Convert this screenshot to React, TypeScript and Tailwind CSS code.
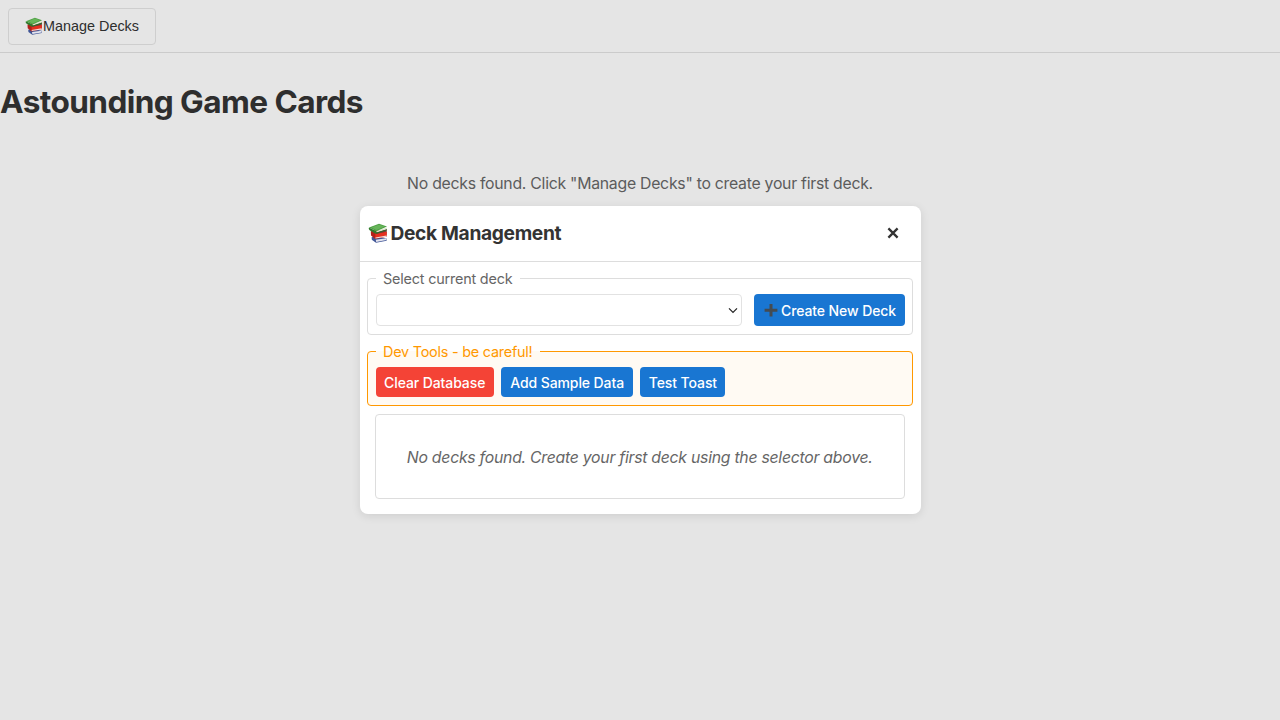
function Books({ className }: { className: string }) {
  return (
    <svg viewBox="0 0 20 20" className={className} aria-hidden="true">
      <path d="M3.6 14.2 8 13l10.6 2.4v2.4L8 19.8 3.8 16.8z" fill="#3f5596" />
      <path d="M7.8 16.8 18.4 15.2v1.9L8.2 18.9z" fill="#e4e4ee" />
      <path d="M2.8 8.2 8 7l10.8 1.5-.2 5.2L7.2 16 3 12.6z" fill="#b3201a" />
      <path d="M7.3 10.6 18.8 8.8l-.3 4.2L7.4 14.8z" fill="#e6301f" />
      <path d="M7.4 14.4 18.5 12.6v1.2L7.4 15.6z" fill="#f3dedb" />
      <path d="M7.6 9.2 18.8 6v2.6L8.4 10.9z" fill="#6a4138" />
      <path d="M8.2 8 18.8 4.6v1.6L8.6 9.6z" fill="#dfe6cf" />
      <path d="M1 4.6C.5 5.8.8 6.6 1.6 7.2l6.1 3.6.9-.7L8 8z" fill="#2f7a2c" />
      <path d="M1 4.6 11 .8l8 2.7L8.4 8.2z" fill="#4fa145" />
      <path d="M3.4 4.6 11 1.7l5.6 1.9-8.2 3.5z" fill="#67b45a" />
      <path d="M8.1 9.8 18.9 6.2v.9L8.3 10.7z" fill="#2c6b29" />
    </svg>
  );
}

function Plus() {
  return (
    <svg viewBox="0 0 14 14" className="h-[14px] w-[14px] shrink-0" aria-hidden="true">
      <path d="M5.5 1h3v4.7h4.9v3H8.5v4.7h-3V8.700H.6v-3h4.900z" fill="#444b52" />
    </svg>
  );
}

const action =
  "flex shrink-0 items-center whitespace-nowrap rounded-[4px] bg-[#1976d2] font-medium text-white text-[14px]";

export default function App() {
  return (
    <div className="relative h-[720px] w-[1280px] overflow-hidden bg-[#e5e5e5] font-['Inter',sans-serif] text-[#2e2e2e]">
      <header className="flex h-[53px] border-b border-[#cbcbcb] pl-[7.5px] pt-[7.5px]">
        <button className="flex h-[37px] w-[148.5px] items-center whitespace-nowrap rounded-[4px] border border-[#cecece] pl-[16px] font-['Liberation_Sans',sans-serif] text-[14.4px] text-[#2e2e2e]">
          <Books className="mr-[0.5px] h-[18px] w-[18px] shrink-0" />
          <span className="pt-[2px]">Manage Decks</span>
        </button>
      </header>
      <main>
        <h1 className="mt-[29px] h-[40px] whitespace-nowrap text-[31.6px] font-bold leading-[40px] tracking-[-0.58px]">
          <span>Astounding Game Cards</span>
        </h1>
        <p className="mt-[50px] text-center text-[15.8px] leading-[24px] tracking-[-0.26px] text-[#5c5c5c]">
          <span>No decks found. Click "Manage Decks" to create your first deck.</span>
        </p>
      </main>

      <section
        role="dialog"
        className="absolute left-[359.5px] top-[206px] h-[308px] w-[561px] rounded-[8px] bg-white text-[#333] shadow-[0_2px_10px_rgba(0,0,0,0.1)]"
      >
        <div className="flex h-[56px] items-center border-b border-[#ddd] pl-[8px] pr-[20px]">
          <Books className="mb-px mr-[3px] h-[20px] w-[20px] shrink-0" />
          <h2 className="whitespace-nowrap text-[19.2px] font-bold tracking-[-0.34px]">
            <span>Deck Management</span>
          </h2>
          <button className="mb-px ml-auto flex h-4 w-4 items-center justify-center" aria-label="Close">
            <svg viewBox="0 0 16 16" className="h-4 w-4">
              <path d="m3.4 3.4 9.2 9.2M12.6 3.4l-9.2 9.2" stroke="#333" strokeWidth="2.3" fill="none" />
            </svg>
          </button>
        </div>
        <div className="px-[7.5px] pt-[8px]">
          <fieldset className="h-[65px] w-[545.9px] rounded-[4px] border border-[#ddd] px-[7.5px]">
            <legend className="h-[17px] whitespace-nowrap px-[7.5px] text-[14.4px] leading-[18px] tracking-[-0.19px] text-[#666]">
              <span>Select current deck</span>
            </legend>
            <div className="mt-[7px] flex gap-[12px]">
              <div className="flex h-[32px] w-[366.5px] items-center justify-end rounded-[4px] border border-[#e2e2e2] pr-[3px]">
                <svg viewBox="0 0 10 10" className="h-[10px] w-[10px]">
                  <path d="m1 3.3 4 4 4-4" fill="none" stroke="#222" strokeWidth="1.2" />
                </svg>
              </div>
              <button className={action + " h-[32px] w-[150.5px] pl-[10px]"}>
                <Plus />
                <span className="ml-[3px] tracking-[-0.1px]">Create New Deck</span>
              </button>
            </div>
          </fieldset>
          <fieldset className="mt-[8px] h-[63px] w-[545.9px] rounded-[4px] border border-[#ff9800] bg-[#fffaf3] px-[7.5px]">
            <legend className="h-[17px] whitespace-nowrap px-[7.5px] text-[14.4px] leading-[18px] tracking-[-0.22px] text-[#ff9800]">
              <span>Dev Tools - be careful!</span>
            </legend>
            <div className="mt-[7px] flex gap-[7.5px]">
              <button className="flex h-[30px] w-[118.4px] items-center justify-center whitespace-nowrap rounded-[4px] bg-[#f44336] text-[14px] font-medium tracking-[-0.1px] text-white">
                <span>Clear Database</span>
              </button>
              <button className={action + " h-[30px] w-[131.5px] justify-center tracking-[-0.1px]"}>
                <span>Add Sample Data</span>
              </button>
              <button className={action + " h-[30px] w-[85px] justify-center tracking-[-0.1px]"}>
                <span>Test Toast</span>
              </button>
            </div>
          </fieldset>
          <div className="ml-[7.5px] mt-[8px] flex h-[85px] w-[530.4px] items-center justify-center whitespace-nowrap rounded-[4px] border border-[#ddd] pt-[2px] text-[15.8px] italic tracking-[-0.26px] text-[#666]">
            <span>No decks found. Create your first deck using the selector above.</span>
          </div>
        </div>
      </section>
    </div>
  );
}
